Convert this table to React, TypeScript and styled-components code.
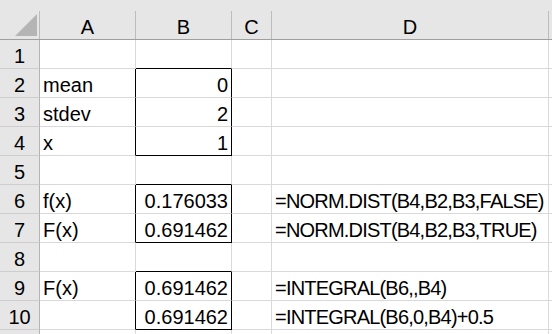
import React from 'react';
import styled, { createGlobalStyle } from 'styled-components';

const GRID = '#d9d9d9';
const HEAD_BG = '#e6e6e6';
const INK = '#000';

type Row = { a?: string; b?: string; d?: string };

const rows: Row[] = [
  {},
  { a: 'mean', b: '0' },
  { a: 'stdev', b: '2' },
  { a: 'x', b: '1' },
  {},
  { a: 'f(x)', b: '0.176033', d: '=NORM.DIST(B4,B2,B3,FALSE)' },
  { a: 'F(x)', b: '0.691462', d: '=NORM.DIST(B4,B2,B3,TRUE)' },
  {},
  { a: 'F(x)', b: '0.691462', d: '=INTEGRAL(B6,,B4)' },
  { b: '0.691462', d: '=INTEGRAL(B6,0,B4)+0.5' },
];

// outlined ranges in column B, as [first row, last row]
const boxes: [number, number][] = [
  [2, 4],
  [6, 7],
  [9, 10],
];

const inBox = (r: number) => boxes.some(([f, l]) => r >= f && r <= l);
const boxEdgeBelow = (r: number) =>
  boxes.some(([f, l]) => r === f - 1 || r === l);

const columns = ['A', 'B', 'C', 'D', ''];

const GlobalStyle = createGlobalStyle`
  html, body {
    margin: 0;
    padding: 0;
    background: #fff;
    overflow: hidden;
  }
  body {
    font-family: "Liberation Sans", Arial, sans-serif;
    font-size: 20px;
    color: ${INK};
  }
`;

const Sheet = styled.div`
  display: grid;
  grid-template-columns: 40px 96px 96px 40px 277px 1fr;
  grid-template-rows: 40px;
  grid-auto-rows: 29px;
  width: 552px;
  height: 334px;
  overflow: hidden;
`;

const HeadCell = styled.div`
  display: flex;
  flex-direction: column;
  justify-content: flex-end;
  background: ${HEAD_BG};
  border-bottom: 1px solid #9f9f9f;
`;

const ColLabel = styled.div<{ $last?: boolean }>`
  display: flex;
  align-items: flex-end;
  justify-content: center;
  height: 28px;
  padding-bottom: 2px;
  box-sizing: border-box;
  line-height: 20px;
  border-right: 1px solid ${(p) => (p.$last ? 'transparent' : '#bcbcbc')};
`;

const Corner = styled(ColLabel)`
  justify-content: flex-start;
  align-items: flex-start;
  padding: 3px 0 0 15px;
`;

const RowNum = styled.div`
  display: flex;
  align-items: flex-end;
  justify-content: center;
  padding-bottom: 2px;
  box-sizing: border-box;
  line-height: 20px;
  background: ${HEAD_BG};
  border-right: 1px solid #b4b4b4;
  border-bottom: 1px solid #cdcdcd;
`;

const Cell = styled.div<{
  $align?: 'left' | 'right';
  $darkRight?: boolean;
  $darkBottom?: boolean;
  $formula?: boolean;
}>`
  display: flex;
  align-items: flex-end;
  justify-content: ${(p) => (p.$align === 'right' ? 'flex-end' : 'flex-start')};
  padding: 0 3px 2px;
  box-sizing: border-box;
  line-height: 20px;
  white-space: nowrap;
  background: #fff;
  letter-spacing: ${(p) => (p.$formula ? '-0.8px' : '0')};
  border-right: 1px solid ${(p) => (p.$darkRight ? INK : GRID)};
  border-bottom: 1px solid ${(p) => (p.$darkBottom ? INK : GRID)};
`;

const SelectAll = () => (
  <svg width="22" height="22" viewBox="0 0 22 22">
    <polygon points="0,22 22,0 22,22" fill="#b5b5b5" />
  </svg>
);

// the next row peeks in under the last one, blank
const TrailingRow = () => (
  <>
    <RowNum />
    {columns.map((_, i) => (
      <Cell key={`t${i}`} />
    ))}
  </>
);

export default function App() {
  return (
    <>
      <GlobalStyle />
      <Sheet>
        <HeadCell>
          <Corner>
            <SelectAll />
          </Corner>
        </HeadCell>
        {columns.map((c, i) => (
          <HeadCell key={`h${i}`}>
            <ColLabel $last={i === columns.length - 1}>{c}</ColLabel>
          </HeadCell>
        ))}

        {rows.map((row, i) => {
          const r = i + 1;
          const boxed = inBox(r);
          return (
            <React.Fragment key={r}>
              <RowNum>{r}</RowNum>
              <Cell $darkRight={boxed}>{row.a}</Cell>
              <Cell $align="right" $darkRight={boxed} $darkBottom={boxEdgeBelow(r)}>
                {row.b}
              </Cell>
              <Cell />
              <Cell $formula>{row.d}</Cell>
              <Cell />
            </React.Fragment>
          );
        })}
        <TrailingRow />
      </Sheet>
    </>
  );
}
